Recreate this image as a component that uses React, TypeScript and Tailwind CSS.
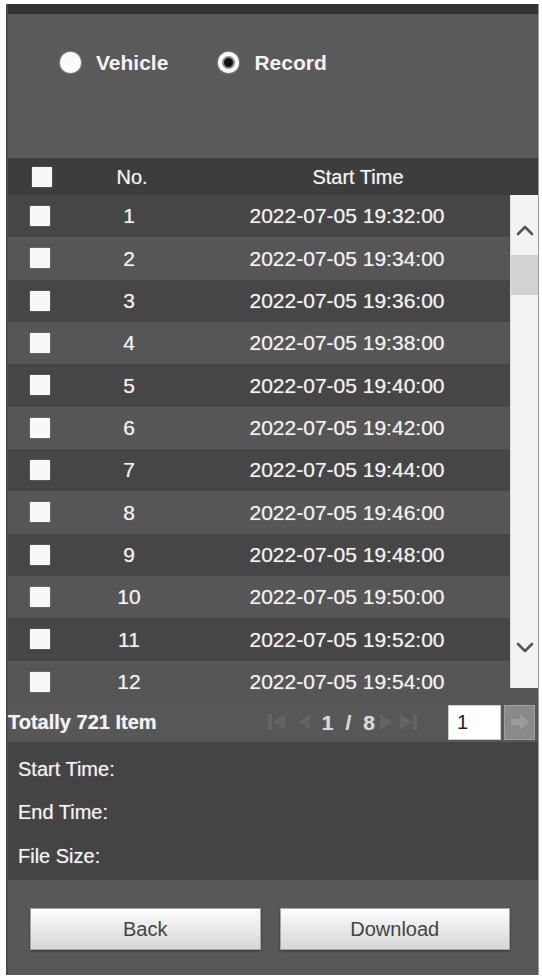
import React from 'react';

const FONT = { fontFamily: '"Liberation Sans", Arial, sans-serif' };

const START = new Date(2022, 6, 5, 19, 32, 0);

function pad(n: number) {
  return n < 10 ? `0${n}` : `${n}`;
}

function fmt(d: Date) {
  return `${d.getFullYear()}-${pad(d.getMonth() + 1)}-${pad(d.getDate())} ${pad(d.getHours())}:${pad(d.getMinutes())}:${pad(d.getSeconds())}`;
}

const rows = Array.from({ length: 12 }, (_, i) => ({
  no: i + 1,
  start: fmt(new Date(START.getTime() + i * 2 * 60 * 1000)),
}));

function Box() {
  return <span className="block w-[20px] h-[20px] bg-[#f8f8f8] rounded-[1px] shadow-[0_0_1px_#fff]" />;
}

function Radio({ checked, label }: { checked?: boolean; label: string }) {
  return (
    <label className="flex items-center gap-[15px]">
      <span className="w-[21px] h-[21px] rounded-full bg-[#fafafa] flex items-center justify-center shadow-[0_0_2px_#eee]">
        {checked && (
          <span className="w-[13px] h-[13px] rounded-full border-[2px] border-[#888] bg-[#111]" />
        )}
      </span>
      <span className="text-[21px] font-bold text-[#f4f4f4]">{label}</span>
    </label>
  );
}

function Chevron({ up }: { up?: boolean }) {
  return (
    <svg width="18" height="12" viewBox="0 0 18 12" className="text-[#555]">
      <path
        d={up ? 'M2 10 L9 3 L16 10' : 'M2 2 L9 9 L16 2'}
        fill="none"
        stroke="currentColor"
        strokeWidth="2.6"
        strokeLinecap="round"
        strokeLinejoin="round"
      />
    </svg>
  );
}

function Pager() {
  const c = '#636363';
  return (
    <div className="flex items-center">
      <svg width="17" height="20" viewBox="0 0 17 20" className="mr-[14px]">
        <rect x="0" y="2" width="4" height="16" fill={c} />
        <path d="M17 2 L5 10 L17 18 Z" fill={c} />
      </svg>
      <svg width="11" height="18" viewBox="0 0 11 18" className="mr-[12px]">
        <path d="M11 1 L0 9 L11 17 Z" fill={c} />
      </svg>
      <span className="flex items-center gap-[12px] text-[21px] font-bold text-[#d8d8d8] mr-[5px] [text-shadow:0_0_1px_rgba(255,255,255,0.5)]">
        <span>1</span>
        <span>/</span>
        <span>8</span>
      </span>
      <svg width="12" height="18" viewBox="0 0 12 18" className="mr-[8px]">
        <path d="M0 1 L12 9 L0 17 Z" fill={c} />
      </svg>
      <svg width="17" height="20" viewBox="0 0 17 20" className="mr-[31px]">
        <path d="M0 2 L12 10 L0 18 Z" fill={c} />
        <rect x="13" y="2" width="4" height="16" fill={c} />
      </svg>
      <div className="w-[53px] h-[35px] bg-white border border-[#ccc] flex items-center pl-[8px] text-[20px] text-[#222]">
        1
      </div>
      <button className="ml-[3px] w-[31px] h-[35px] bg-[#8a8a8a] border border-[#a0a0a0] flex items-center justify-center">
        <svg width="20" height="18" viewBox="0 0 20 18">
          <path d="M1 6 H10 V1 L19 9 L10 17 V12 H1 Z" fill="#9c9c9c" />
        </svg>
      </button>
    </div>
  );
}

const cellText = '[text-shadow:0_0_1px_rgba(255,255,255,0.55)]';

export default function App() {
  return (
    <div className="min-h-screen bg-white pt-[4px] pl-[6px]" style={FONT}>
      <div className="w-[532px] h-[971px] flex flex-col bg-[#5a5a5a] border-l-[2px] border-[#4a4a4a] shadow-[1px_0_0_#9a9a9a]">
        <div className="h-[10px] bg-[#333]" />

        {/* search mode */}
        <div className="h-[144px] flex items-start gap-[50px] pt-[33px] pl-[52px]">
          <Radio label="Vehicle" />
          <Radio label="Record" checked />
        </div>

        {/* list header */}
        <div className={`h-[37px] bg-[#3d3d3d] flex items-center text-[20px] text-[#f2f2f2] ${cellText}`}>
          <div className="w-[72px] pl-[24px]">
            <Box />
          </div>
          <div className="w-[104px] text-center">No.</div>
          <div className="w-[348px] text-center">Start Time</div>
        </div>

        {/* list body */}
        <div className="relative">
          {rows.map((r) => (
            <div
              key={r.no}
              className={`h-[42.33px] flex items-center text-[21px] text-[#f2f2f2] ${cellText} ${r.no % 2 ? 'bg-[#464646]' : 'bg-[#565656]'}`}
            >
              <div className="w-[72px] pl-[22px]">
                <Box />
              </div>
              <div className="w-[98px] text-center">{r.no}</div>
              <div className="w-[338px] text-center">{r.start}</div>
            </div>
          ))}
          <div className="absolute right-0 top-0 w-[28px] h-[493px] bg-[#f3f3f3] border-l border-[#ddd] flex flex-col items-center">
            <div className="h-[60px] flex items-center justify-center pt-[10px]">
              <Chevron up />
            </div>
            <div className="w-full h-[40px] bg-[#d2d2d2]" />
            <div className="flex-1" />
            <div className="h-[60px] flex items-center justify-center pb-[20px]">
              <Chevron />
            </div>
          </div>
        </div>

        {/* pagination */}
        <div className="h-[39px] bg-[#575757] flex items-center justify-between pr-[3px]">
          <span className={`text-[20px] font-bold text-[#f2f2f2] ${cellText}`}>Totally 721 Item</span>
          <Pager />
        </div>

        {/* file info */}
        <div className={`h-[138px] bg-[#444] pt-[5px] pl-[10px] text-[20px] text-[#f2f2f2] ${cellText}`}>
          <div className="h-[43.5px] flex items-center">Start Time:</div>
          <div className="h-[43.5px] flex items-center">End Time:</div>
          <div className="h-[43.5px] flex items-center">File Size:</div>
        </div>

        {/* actions */}
        <div className="flex-1 bg-[#585858] flex gap-[19px] pt-[28px] pl-[22px] pr-[28px]">
          <button className="flex-1 h-[42px] bg-gradient-to-b from-[#fdfdfd] to-[#d6d6d6] border border-[#a5a5a5] shadow-[0_1px_2px_rgba(0,0,0,0.4)] text-[20px] text-[#444]">
            Back
          </button>
          <button className="flex-1 h-[42px] bg-gradient-to-b from-[#fdfdfd] to-[#d6d6d6] border border-[#a5a5a5] shadow-[0_1px_2px_rgba(0,0,0,0.4)] text-[20px] text-[#444]">
            Download
          </button>
        </div>
      </div>
    </div>
  );
}
